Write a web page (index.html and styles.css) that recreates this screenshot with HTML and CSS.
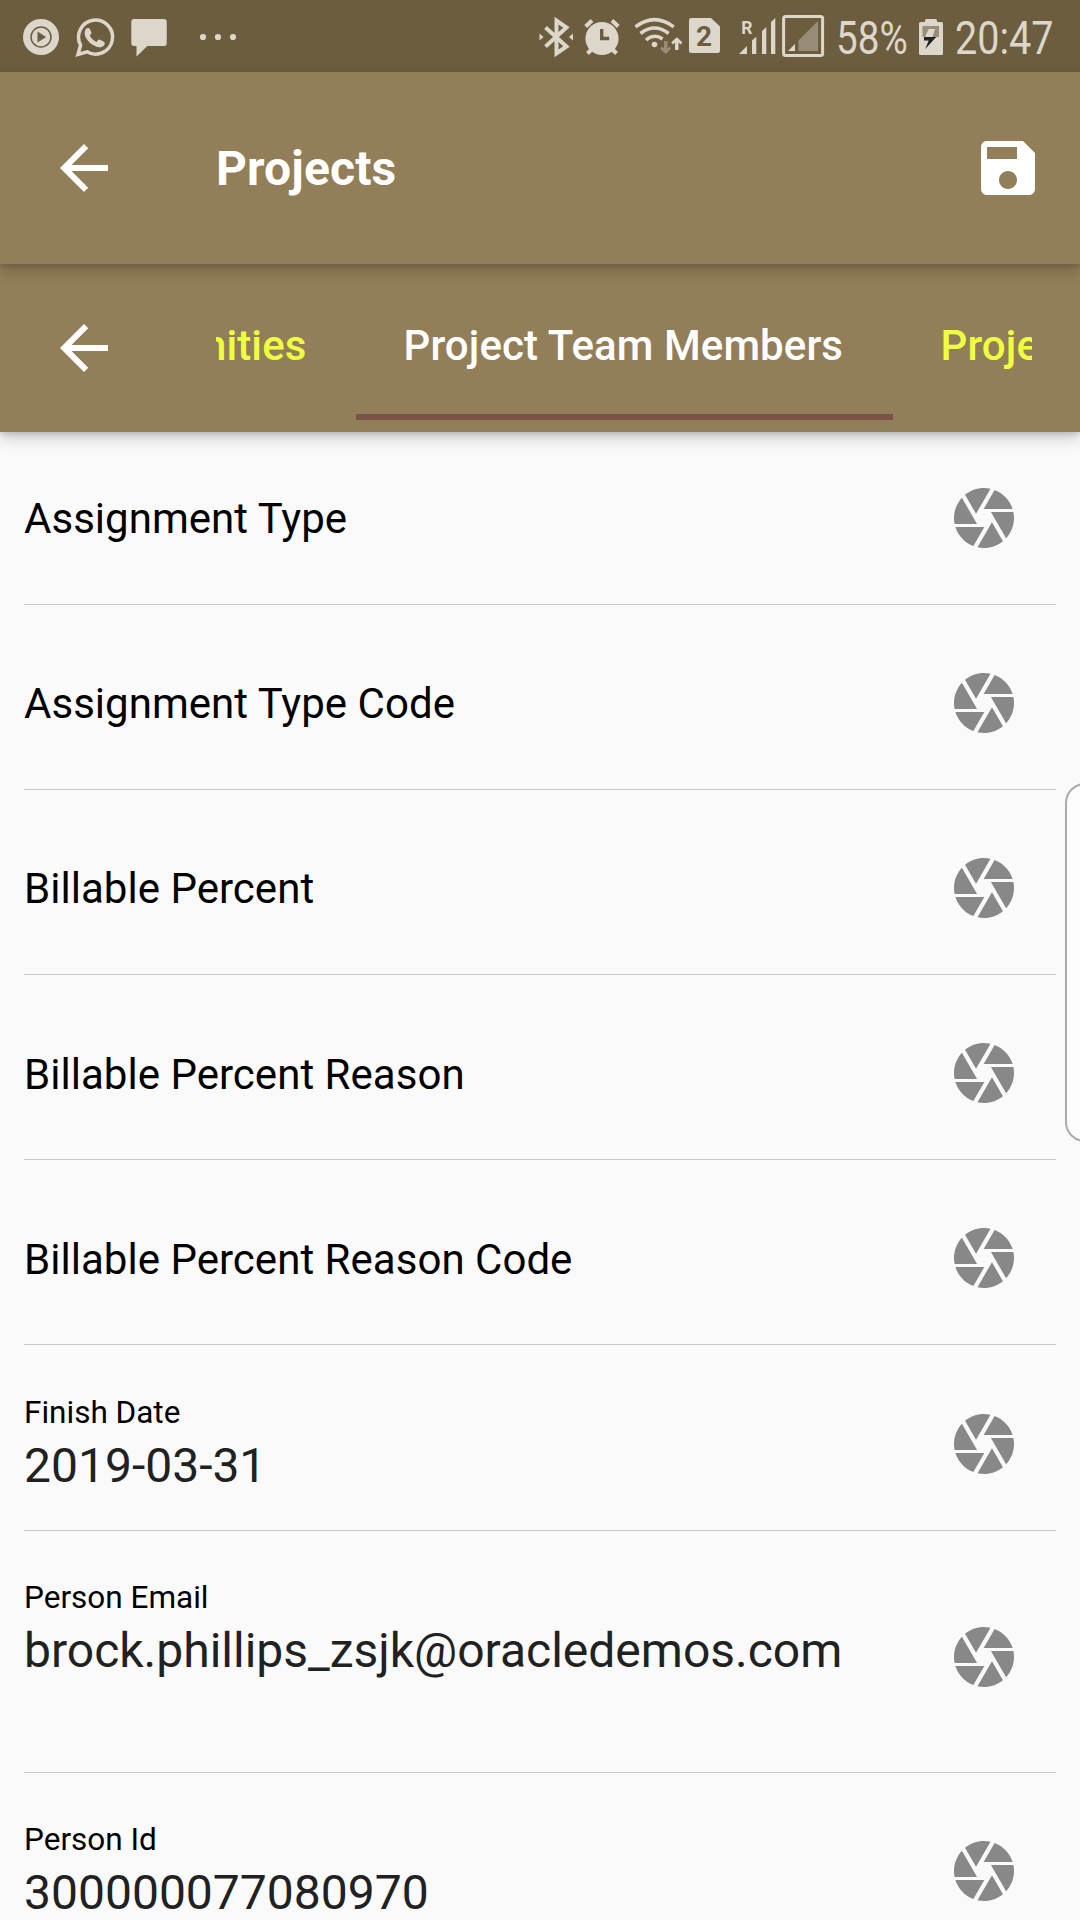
FILE: index.html
```html
<!DOCTYPE html>
<html lang="en">
<head>
<meta charset="utf-8">
<title>Projects</title>
<link rel="stylesheet" href="styles.css">
</head>
<body>
<svg class="defs" width="0" height="0" aria-hidden="true">
  <symbol id="shutter" viewBox="0 0 24 24"><path d="M9.4 10.5l4.77-8.26C13.47 2.09 12.75 2 12 2c-2.4 0-4.6.85-6.32 2.25l3.66 6.35.06-.1zM21.54 9c-.92-2.92-3.15-5.26-6-6.34L11.88 9h9.66zm.26 1h-7.49l.29.5 4.76 8.25C21 16.97 22 14.61 22 12c0-.69-.07-1.35-.2-2zM8.54 12l-3.9-6.75C3.01 7.03 2 9.39 2 12c0 .69.07 1.35.2 2h7.49l-1.15-2zm-6.08 3c.92 2.92 3.15 5.26 6 6.34L12.12 15H2.46zm11.27 0l-3.9 6.76c.7.15 1.42.24 2.17.24 2.4 0 4.6-.85 6.32-2.25l-3.66-6.35-.93 1.6z"/></symbol>
  <symbol id="back" viewBox="0 0 24 24"><path d="M20 11H7.83l5.59-5.59L12 4l-8 8 8 8 1.41-1.41L7.83 13H20v-2z"/></symbol>
</svg>
<div class="screen">
  <header class="status">
    <svg class="status-left" width="240" height="72" viewBox="0 0 240 72">
      <circle cx="41" cy="37" r="18"/>
      <circle class="cut-line" cx="41" cy="37" r="10"/>
      <path class="cut" d="M37.5 31.5v11l8.7-5.5z"/>
      <path class="line" d="M78 54.5l2.6-9.300A17 17 0 1 1 87 51.800z"/>
      <path d="M86.300 28.500c1.500-.9 2.900-.8 3.600.5l1.500 3.500c.3.900-.1 1.400-1.700 3.100 1.600 3 3.800 5 6.800 6.300 1.800-2 2.300-2.700 3.400-2.200l4 2c1.100.6.9 1.700.6 2.700-.8 2-3.500 3.100-5.600 2.800-6.300-1.200-10.500-4.700-13.600-10.700-1.100-3-.7-6.400 1-8z"/>
      <path d="M134 19h30q2.700 0 2.700 2.700v21.600q0 2.700-2.700 2.700h-16.700l-10.800 10.500V46H134q-2.700 0-2.700-2.700V21.700q0-2.700 2.700-2.700z"/>
      <circle cx="203" cy="37" r="3.100"/><circle cx="218" cy="37" r="3.100"/><circle cx="233" cy="37" r="3.100"/>
    </svg>
    <svg class="status-icons" width="296" height="72" viewBox="534 0 296 72">
      <path class="line bt" d="M545.500 27.500L566.500 46.500 556.500 53.500V20.500L566.500 27.500 545.500 46.500"/>
      <path d="M539.500 33.500l4 3.500-4 3.500zM573 33.500l-4 3.500 4 3.500z"/>
      <circle cx="602" cy="38.500" r="16.600"/>
      <path class="line wide" d="M585.700 26.500l6.300-6M612 20.500l6.300 6M591.500 49.500l-4 4M612.500 49.500l4 4"/>
      <path class="cut-hand" d="M601.700 29v9.500h7.500"/>
      <path class="line" d="M635.500 26.800Q654.500 12.500 673.700 26.800M640.500 33.500Q654.500 22.500 668.600 33.500M646 40Q654.500 33 662.500 39"/>
      <circle cx="654.500" cy="44.500" r="2.800"/>
      <path class="dim" d="M664 41h3.500v7.500l2-2 1.500 2.300-5.300 5.400-5.500-5.400 1.600-2.300 2.200 2z"/>
      <path d="M675 50h3.500v-7.500l2.200 2 1.600-2.300-5.500-5-5.500 5 1.600 2.300 2.100-2z"/>
      <path d="M691.500 18H711l9 8.500v24q0 2.500-2.500 2.500h-26q-2.500 0-2.500-2.500v-30q0-2.500 2.500-2.500z"/>
      <text class="sim" x="704" y="45.500">2</text>
      <text class="roaming" x="741.300" y="33.800">R</text>
      <path d="M739 54l8-8v8zM752 54V40.500l4.300-3.800V54zM762 54V31l4.300-4V54zM771 54V22l4.300-4V54z"/>
      <rect class="frame" x="783.600" y="16.500" width="39" height="39" rx="2"/>
      <path d="M788 51l7-7v7z"/>
      <path class="dim" d="M798.500 51V40.500L818 21v30z"/>
    </svg>
    <span class="cond percent"><span>58%</span></span>
    <svg class="battery" width="24" height="72" viewBox="919 0 24 72">
      <path d="M925 22v-1.500q0-1.500 1.500-1.500h9q1.500 0 1.500 1.500V22h4.500q1.500 0 1.500 1.500v30q0 1.500-1.500 1.500h-21q-1.500 0-1.500-1.500v-30q0-1.500 1.500-1.500z"/>
      <path class="dim" d="M922.500 26H939v11h-16.500z"/>
      <path d="M928.700 29H935l-2.500 8h-7.500z"/>
      <path class="bolt" d="M924 37h12.200l-11 12 3.500-8.500H924z"/>
    </svg>
    <span class="cond clock"><span>20:47</span></span>
  </header>

  <div class="appbar">
    <svg class="icon" width="72" height="72"><use href="#back"/></svg>
    <h1 class="title">Projects</h1>
    <svg class="icon" width="72" height="72" viewBox="0 0 24 24"><path d="M17 3H5c-1.110 0-2 .9-2 2v14c0 1.100.89 2 2 2h14c1.100 0 2-.9 2-2V7l-4-4zm-5 16c-1.660 0-3-1.340-3-3s1.340-3 3-3 3 1.340 3 3-1.340 3-3 3zm3-10H5V5h10v4z"/></svg>
  </div>

  <nav class="tabbar">
    <svg class="icon" width="72" height="72"><use href="#back"/></svg>
    <div class="tabs">
      <div class="tab tab-prev">nities</div>
      <div class="tab active">Project Team Members</div>
      <div class="tab">Project</div>
    </div>
  </nav>

  <main class="list">
    <div class="row"><div class="empty">Assignment Type</div><svg class="shutter"><use href="#shutter"/></svg></div>
    <div class="row"><div class="empty">Assignment Type Code</div><svg class="shutter"><use href="#shutter"/></svg></div>
    <div class="row"><div class="empty">Billable Percent</div><svg class="shutter"><use href="#shutter"/></svg></div>
    <div class="row"><div class="empty">Billable Percent Reason</div><svg class="shutter"><use href="#shutter"/></svg></div>
    <div class="row"><div class="empty">Billable Percent Reason Code</div><svg class="shutter"><use href="#shutter"/></svg></div>
    <div class="row"><div class="field"><div class="label">Finish Date</div><div class="value">2019-03-31</div></div><svg class="shutter"><use href="#shutter"/></svg></div>
    <div class="row tall"><div class="field"><div class="label">Person Email</div><div class="value">brock.phillips_zsjk@oracledemos.com</div></div><svg class="shutter"><use href="#shutter"/></svg></div>
    <div class="row"><div class="field"><div class="label">Person Id</div><div class="value">300000077080970</div></div><svg class="shutter"><use href="#shutter"/></svg></div>
  </main>
  <div class="edge-handle"></div>
</div>
</body>
</html>
```
FILE: styles.css
```css
* { box-sizing: border-box; }
body { margin: 0; font-family: Roboto, "Liberation Sans", sans-serif; background: #fafafa; }
.defs { position: absolute; }
.screen {
  position: relative;
  display: flex;
  flex-direction: column;
  width: 1080px;
  height: 1920px;
  overflow: hidden;
  background: #fafafa;
}
svg { display: block; flex: none; }

/* status bar */
.status {
  display: flex;
  flex: none;
  height: 72px;
  background: #6c5d3f;
  color: #dcd6cb;
  fill: #dcd6cb;
}
.status-icons { margin-left: 294px; }
.line { fill: none; stroke: #dcd6cb; stroke-width: 3.5; }
.bt { stroke-width: 4; }
.wide { stroke-width: 4; }
.cut { fill: #6c5d3f; }
.cut-line { fill: none; stroke: #6c5d3f; stroke-width: 1.5; }
.cut-hand { fill: none; stroke: #6c5d3f; stroke-width: 3.4; }
.dim { fill: #998d78; }
.frame { fill: none; stroke: #dcd6cb; stroke-width: 3; }
.bolt { fill: #222; }
.sim { font-size: 28px; font-weight: 700; text-anchor: middle; fill: #6c5d3f; }
.roaming { font-size: 17.500px; font-weight: 700; }
.cond { height: 72px; font-size: 46px; line-height: 77px; white-space: nowrap; }
.cond span { display: inline-block; transform: scaleX(.84); transform-origin: 0 50%; }
.percent { width: 83px; margin-left: 6px; }
.clock { margin-left: 12px; }
.clock span { transform: scaleX(.86); }

/* app bar and tabs */
.appbar, .tabbar {
  position: relative;
  display: flex;
  flex: none;
  align-items: center;
  padding: 0 36px 0 48px;
  background: #927e58;
  fill: #fff;
  box-shadow: 0 6px 15px rgba(0, 0, 0, .2), 0 3px 4px rgba(0, 0, 0, .1);
}
.appbar { z-index: 2; height: 192px; }
.title {
  flex: 1;
  margin: 0 0 0 96px;
  padding-top: 2px;
  font-size: 48px;
  font-weight: 700;
  line-height: 56px;
  letter-spacing: .15px;
  color: #fff;
}
.tabbar { z-index: 1; height: 168px; padding-right: 48px; }
.tabs {
  display: flex;
  flex: 1;
  min-width: 0;
  height: 168px;
  margin-left: 96px;
  padding: 12px 0;
  overflow: hidden;
}
.tab {
  flex: none;
  height: 144px;
  padding: 0 48px;
  font-size: 42px;
  font-weight: 500;
  line-height: 140px;
  letter-spacing: .1px;
  white-space: nowrap;
  color: #eeff41;
}
.tab-prev {
  display: flex;
  justify-content: flex-end;
  width: 139.500px;
  padding: 0 49px 0 0;
  overflow: hidden;
}
.active { min-width: 537px; color: #fff; border-bottom: 6px solid #795548; }

/* form rows */
.list { display: grid; grid-auto-rows: max-content; row-gap: 12.120px; padding: 0 24px; }
.row {
  display: flex;
  align-items: center;
  justify-content: space-between;
  height: 173px;
  padding-right: 36px;
  border-bottom: 1px solid #c3cace;
}
.tall { height: 230px; }
.empty { padding-top: 2.400px; font-size: 42px; line-height: 50px; letter-spacing: .03px; color: #000; }
.field { align-self: flex-start; padding-top: 36px; white-space: nowrap; }
.label { font-size: 31.500px; line-height: 37px; color: #000; }
.value { margin-top: 7px; font-size: 48px; line-height: 56px; color: #212121; }
.shutter { width: 72px; height: 72px; fill: #888; }

/* system edge panel handle */
.edge-handle {
  position: absolute;
  left: 1065px;
  top: 783px;
  width: 40px;
  height: 359px;
  border: 2px solid #ababab;
  border-radius: 20px;
  background: #fdfdfd;
}
```
